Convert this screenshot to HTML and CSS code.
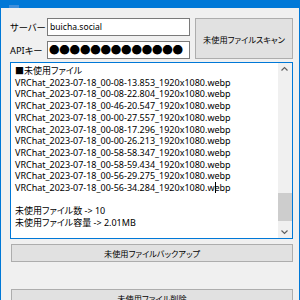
FILE: index.html
```html
<!DOCTYPE html>
<html lang="ja">

<head>
  <meta charset="UTF-8">
  <title>未使用ファイルクリーナー</title>
  <link rel="stylesheet" href="styles.css">
</head>

<body>

  <div class="window">

    <div class="titlebar">
      <span class="title-icon"></span>
      <span class="title">MisskeyUnusedFileCleaner</span>
    </div>

    <div class="client">
      <div class="settings">
        <div class="fields">
          <div class="field">
            <span class="field-label">サーバー</span>
            <div class="textbox">buicha.social</div>
          </div>
          <div class="field">
            <span class="field-label">APIキー</span>
            <div class="textbox password">●●●●●●●●●●●●●</div>
          </div>
        </div>
        <button class="btn scan-btn">未使用ファイルスキャン</button>
      </div>

      <!-- ログ表示エリア -->
      <div class="log">
        <div class="log-text">
          <div>■未使用ファイル</div>
          <div>VRChat_2023-07-18_00-08-13.853_1920x1080.webp</div>
          <div>VRChat_2023-07-18_00-08-22.804_1920x1080.webp</div>
          <div>VRChat_2023-07-18_00-46-20.547_1920x1080.webp</div>
          <div>VRChat_2023-07-18_00-00-27.557_1920x1080.webp</div>
          <div>VRChat_2023-07-18_00-08-17.296_1920x1080.webp</div>
          <div>VRChat_2023-07-18_00-00-26.213_1920x1080.webp</div>
          <div>VRChat_2023-07-18_00-58-58.347_1920x1080.webp</div>
          <div>VRChat_2023-07-18_00-58-59.434_1920x1080.webp</div>
          <div>VRChat_2023-07-18_00-56-29.275_1920x1080.webp</div>
          <div>VRChat_2023-07-18_00-56-34.284_1920x1080.w<span class="caret"></span>ebp</div>
          <div>&nbsp;</div>
          <div>未使用ファイル数 -&gt; 10</div>
          <div>未使用ファイル容量 -&gt; 2.01MB</div>
        </div>
        <div class="scrollbar">
          <svg class="arrow" width="15" height="12" viewBox="0 0 15 12">
            <path d="M4.5 7.5 L7.5 4.5 L10.5 7.5" fill="none" stroke="#606060" stroke-width="1.2" />
          </svg>
          <div class="track">
            <div class="thumb"></div>
          </div>
          <svg class="arrow" width="15" height="12" viewBox="0 0 15 12">
            <path d="M4.5 4.5 L7.5 7.5 L10.5 4.5" fill="none" stroke="#606060" stroke-width="1.2" />
          </svg>
        </div>
      </div>

      <button class="btn wide-btn">未使用ファイルバックアップ</button>
      <button class="btn wide-btn delete-btn">未使用ファイル削除</button>
    </div>
  </div>

</body>

</html>
```

FILE: styles.css
```css
* {
  margin: 0;
  padding: 0;
  box-sizing: border-box;
}

body {
  width: 300px;
  height: 300px;
  overflow: hidden;
  font-family: "Noto Sans", "Noto Sans CJK JP", sans-serif;
  font-size: 9px;
  color: #000;
  background: #f0f0f0;
}

.window {
  width: 300px;
  height: 300px;
  border-left: 1px solid #0078d7;
  border-right: 1px solid #0078d7;
  background: #f0f0f0;
  overflow: hidden;
}

/* Title bar, mostly cut off at the top */
.titlebar {
  height: 8px;
  background: #0078d7;
  display: flex;
  align-items: flex-end;
  gap: 6px;
  padding-left: 8px;
  overflow: hidden;
}

.title-icon {
  flex: none;
  width: 10px;
  height: 12px;
  margin-bottom: -9px;
  background: #3d8fdc;
}

.title {
  color: #4f9be0;
  font-size: 11px;
  line-height: 12px;
  margin-bottom: -10px;
  white-space: nowrap;
}

.client {
  padding: 10px 6px 0 9px;
  display: flex;
  flex-direction: column;
  font-feature-settings: "palt";
}

.settings {
  display: flex;
  gap: 5px;
  height: 41px;
}

.fields {
  width: 180px;
  display: flex;
  flex-direction: column;
  gap: 5px;
}

.field {
  display: flex;
  align-items: center;
  height: 18px;
}

.field-label {
  width: 37px;
  font-size: 9.3px;
}

.textbox {
  width: 143px;
  height: 18px;
  border: 1px solid #7a7a7a;
  background: #fff;
  padding: 0 2px;
  line-height: 16px;
  font-size: 8.6px;
  white-space: nowrap;
  overflow: hidden;
}

.password {
  font-family: "Noto Sans CJK JP", sans-serif;
  font-size: 10.5px;
  letter-spacing: -0.2px;
  padding-left: 1px;
}

.btn {
  font-family: inherit;
  font-size: 8.2px;
  font-feature-settings: "palt";
  color: #000;
  background: #e1e1e1;
  border: 1px solid #adadad;
}

.scan-btn {
  width: 98px;
  height: 41px;
}

.log {
  margin-top: 3px;
  height: 177px;
  border: 1px solid #0078d7;
  background: #fff;
  display: flex;
}

.log-text {
  flex: 1;
  padding: 2px 0 0 4px;
  line-height: 11.7px;
  white-space: nowrap;
  overflow: hidden;
}

.caret {
  display: inline-block;
  width: 1px;
  height: 11px;
  margin-right: -1px;
  vertical-align: -2px;
  background: #000;
}

.scrollbar {
  width: 15px;
  border-left: 1px solid #fff;
  background: #f0f0f0;
  display: flex;
  flex-direction: column;
}

.arrow {
  flex: none;
  margin-left: -1px;
}

.track {
  flex: 1;
  display: flex;
  flex-direction: column;
  justify-content: flex-end;
  padding-bottom: 5px;
}

.thumb {
  height: 28px;
  background: #cdcdcd;
}

.wide-btn {
  margin-top: 5px;
  margin-left: 1px;
  height: 18px;
}

.delete-btn {
  margin-top: 27px;
}
```
